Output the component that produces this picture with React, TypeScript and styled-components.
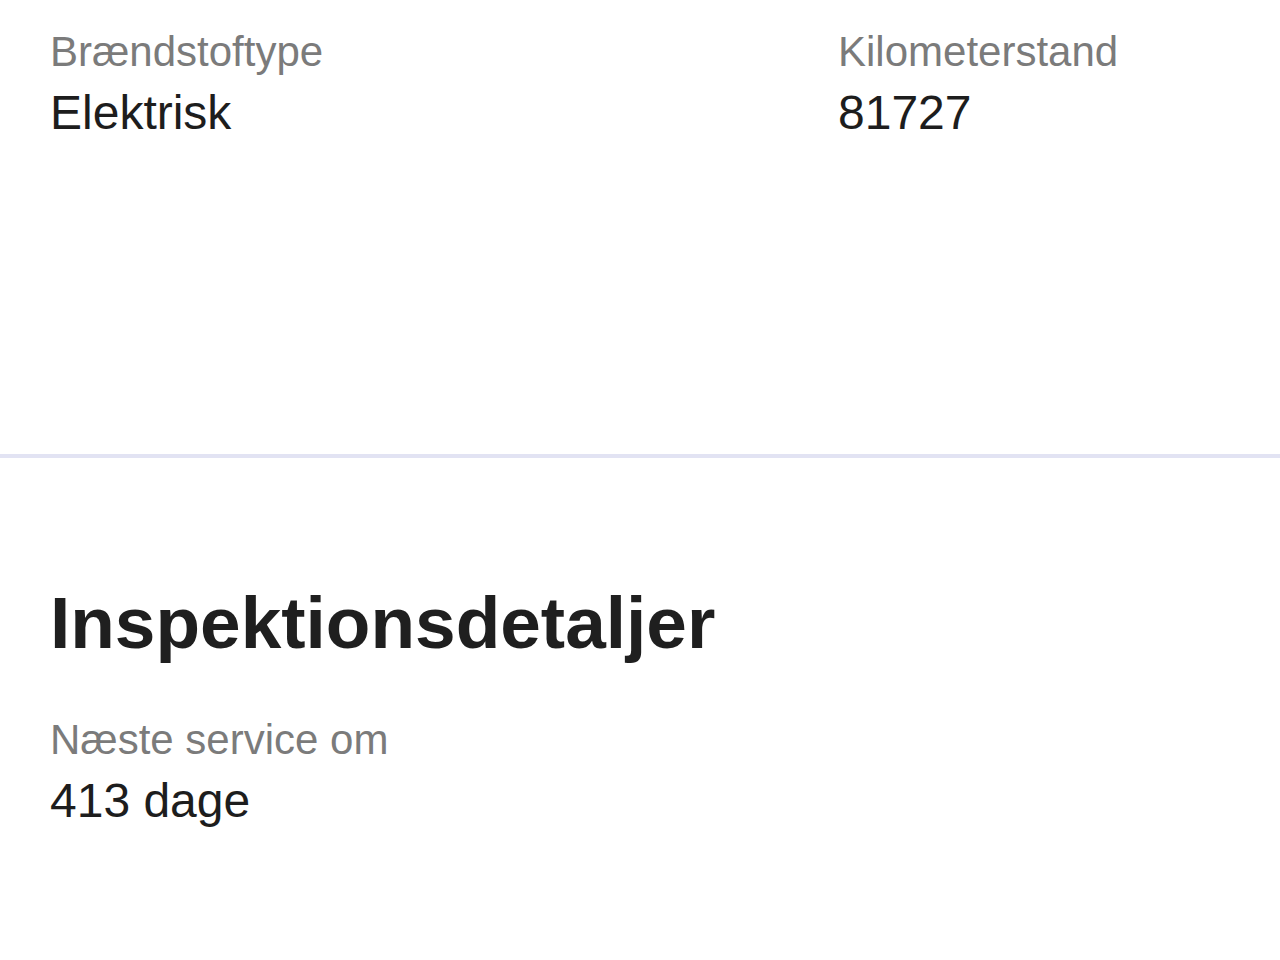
import React from "react";
import styled, { createGlobalStyle } from "styled-components";

const GlobalStyle = createGlobalStyle`
  html, body {
    margin: 0;
    padding: 0;
    background: #ffffff;
  }
  body {
    font-family: "Liberation Sans", Arial, Helvetica, sans-serif;
    -webkit-font-smoothing: antialiased;
  }
`;

const Page = styled.div`
  width: 1280px;
  min-height: 960px;
  background: #ffffff;
  display: flex;
  flex-direction: column;
`;

const TopSection = styled.section`
  height: 454px;
  box-sizing: border-box;
  padding: 27px 50px 0;
`;

const FieldGrid = styled.div`
  display: grid;
  grid-template-columns: 788px 1fr;
`;

const Field = styled.div`
  display: flex;
  flex-direction: column;
  gap: 7px;
`;

const Label = styled.div`
  font-size: 42px;
  line-height: 50px;
  color: #7b7b7b;
  white-space: nowrap;
`;

const Value = styled.div`
  font-size: 48px;
  line-height: 58px;
  color: #1d1d1d;
  white-space: nowrap;
`;

const Divider = styled.hr`
  margin: 0;
  border: none;
  height: 4px;
  background: #e2e3f3;
`;

const Section = styled.section`
  padding: 122px 50px 0;
  display: flex;
  flex-direction: column;
  gap: 49px;
`;

const Heading = styled.h2`
  margin: 0;
  font-size: 73px;
  line-height: 86px;
  font-weight: 700;
  color: #1f1f1f;
`;

function InfoField({ label, value }: { label: string; value: string }) {
  return (
    <Field>
      <Label>{label}</Label>
      <Value>{value}</Value>
    </Field>
  );
}

export default function App() {
  return (
    <>
      <GlobalStyle />
      <Page>
        <TopSection>
          <FieldGrid>
            <InfoField label="Brændstoftype" value="Elektrisk" />
            <InfoField label="Kilometerstand" value="81727" />
          </FieldGrid>
        </TopSection>
        <Divider />
        <Section>
          <Heading>Inspektionsdetaljer</Heading>
          <InfoField label="Næste service om" value="413 dage" />
        </Section>
      </Page>
    </>
  );
}
